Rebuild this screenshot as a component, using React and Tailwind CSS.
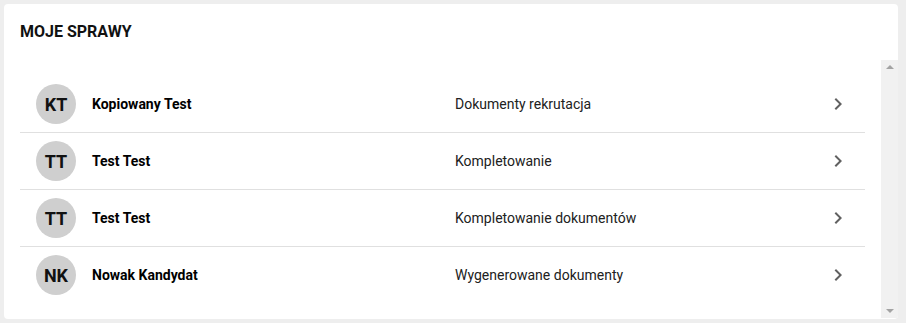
import React from 'react';

const cases = [
  { initials: 'KT', name: 'Kopiowany Test', stage: 'Dokumenty rekrutacja' },
  { initials: 'TT', name: 'Test Test', stage: 'Kompletowanie' },
  { initials: 'TT', name: 'Test Test', stage: 'Kompletowanie dokumentów' },
  { initials: 'NK', name: 'Nowak Kandydat', stage: 'Wygenerowane dokumenty' },
];

const ChevronRight = () => (
  <svg viewBox="0 0 24 24" className="w-6 h-6 text-[#616161]" fill="currentColor">
    <path d="M10 6 8.59 7.41 13.17 12l-4.58 4.59L10 18l6-6z" />
  </svg>
);

const App = () => {
  return (
    <div className="w-[906px] h-[323px] bg-[#eeeeee] pt-1 pl-1 font-['Roboto',sans-serif]">
      {/* Card */}
      <div className="w-[894px] h-[315px] bg-white rounded-[4px] flex flex-col overflow-hidden">
        <div className="px-4 pt-4 h-[56px] shrink-0">
          <h2 className="text-[16px] leading-6 font-bold text-[#111]">MOJE SPRAWY</h2>
        </div>

        {/* Scroll area */}
        <div className="flex h-[258px]">
          <ul className="flex-1 px-4 pt-4">
            {cases.map((c, i) => (
              <li
                key={i}
                className={`h-14 flex items-center pl-4 pr-[15px] box-content ${
                  i < cases.length - 1 ? 'border-b border-[#e0e0e0]' : ''
                }`}
              >
                <div className="w-10 h-10 rounded-full bg-[#cfcfcf] flex items-center justify-center text-[18px] font-bold text-[#111] shrink-0">
                  {c.initials}
                </div>
                <div className="w-[379px] shrink-0 pl-4 text-[14px] font-bold text-black">{c.name}</div>
                <div className="flex-1 text-[14px] text-[#212121]">{c.stage}</div>
                <ChevronRight />
              </li>
            ))}
          </ul>

          {/* Scrollbar */}
          <div className="w-[17px] bg-[#f1f1f1] flex flex-col justify-between items-center py-[5px]">
            <div className="w-0 h-0 border-l-[4px] border-r-[4px] border-b-[4px] border-l-transparent border-r-transparent border-b-[#a3a3a3]" />
            <div className="w-0 h-0 border-l-[4px] border-r-[4px] border-t-[4px] border-l-transparent border-r-transparent border-t-[#a3a3a3]" />
          </div>
        </div>
      </div>
    </div>
  );
};

export default App;
